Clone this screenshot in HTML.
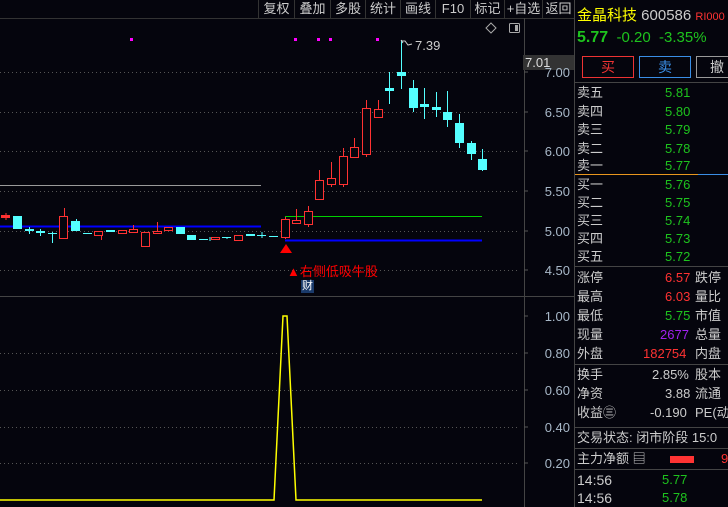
<!DOCTYPE html><html><head><meta charset="utf-8"><style>
body{margin:0;width:728px;height:507px;background:#05050d;overflow:hidden;position:relative;font-family:"Liberation Sans","Noto Sans CJK SC",sans-serif;}
.a{position:absolute;white-space:nowrap}
.tb{position:absolute;top:0;height:18px;font-size:13px;color:#ccc;line-height:17px;text-align:center;border-right:1px solid #333}
.r{position:absolute;left:577px;font-size:13px;color:#ccc;white-space:nowrap;line-height:18px}
.g{color:#1ec31e}.rd{color:#ff3232}
.hl{position:absolute;left:574px;width:154px;height:1px;background:#444}
</style></head><body>
<svg width="728" height="507" style="position:absolute;left:0;top:0">
<line x1="0" y1="18.5" x2="574" y2="18.5" stroke="#333"/>
<line x1="258.5" y1="0" x2="258.5" y2="18" stroke="#333"/>
<line x1="524.5" y1="18" x2="524.5" y2="507" stroke="#444"/>
<line x1="574.5" y1="0" x2="574.5" y2="507" stroke="#444"/>
<line x1="0" y1="296.5" x2="574" y2="296.5" stroke="#444"/>
<g stroke="#555" stroke-dasharray="1,3">
<line x1="0" y1="72.5" x2="520" y2="72.5"/><line x1="0" y1="112.5" x2="520" y2="112.5"/><line x1="0" y1="151.5" x2="520" y2="151.5"/><line x1="0" y1="191.5" x2="520" y2="191.5"/><line x1="0" y1="231.5" x2="520" y2="231.5"/><line x1="0" y1="270.5" x2="520" y2="270.5"/>
<line x1="0" y1="353.5" x2="520" y2="353.5"/><line x1="0" y1="390.5" x2="520" y2="390.5"/><line x1="0" y1="427.5" x2="520" y2="427.5"/><line x1="0" y1="463.5" x2="520" y2="463.5"/>
</g>
<line x1="0" y1="185.5" x2="261" y2="185.5" stroke="#9a9a9a"/>
<line x1="0" y1="226.5" x2="261" y2="226.5" stroke="#0000ff" stroke-width="2"/>
<line x1="285" y1="216.5" x2="482" y2="216.5" stroke="#00d000"/>
<line x1="285" y1="240.5" x2="482" y2="240.5" stroke="#0000ff" stroke-width="2"/>
<g fill="#ff00ff"><rect x="130" y="38" width="3" height="3"/><rect x="294" y="38" width="3" height="3"/><rect x="317" y="38" width="3" height="3"/><rect x="329" y="38" width="3" height="3"/><rect x="376" y="38" width="3" height="3"/></g>
<g stroke="#ff3232" fill="none">
<path d="M285.5 217V239M319.5 170V199M331.5 162V187M343.5 148V187M354.5 138V157M366.5 100V157M378.5 100V109M296.5 209V223M308.5 206V227M64.5 208V238M101.5 231V240M133.5 225V232M157.5 222V233M6 213V220"/>
<rect x="281.5" y="219.5" width="8" height="18" fill="#05050d"/>
<rect x="292.5" y="220.5" width="8" height="3" fill="#05050d"/>
<rect x="304.5" y="211.5" width="8" height="13" fill="#05050d"/>
<rect x="315.5" y="180.5" width="8" height="19" fill="#05050d"/>
<rect x="327.5" y="178.5" width="8" height="6" fill="#05050d"/>
<rect x="339.5" y="156.5" width="8" height="28" fill="#05050d"/>
<rect x="350.5" y="147.5" width="8" height="10" fill="#05050d"/>
<rect x="362.5" y="108.5" width="8" height="46" fill="#05050d"/>
<rect x="374.5" y="109.5" width="8" height="8" fill="#05050d"/>
<rect x="59.5" y="216.5" width="8" height="22" fill="#05050d"/>
<rect x="94.5" y="231.5" width="8" height="4" fill="#05050d"/>
<rect x="118.5" y="230.5" width="8" height="3" fill="#05050d"/>
<rect x="129.5" y="229.5" width="8" height="3" fill="#05050d"/>
<rect x="141.5" y="232.5" width="8" height="14" fill="#05050d"/>
<rect x="153.5" y="231.5" width="8" height="2" fill="#05050d"/>
<rect x="164.5" y="227.5" width="8" height="3" fill="#05050d"/>
<rect x="211.5" y="237.5" width="8" height="2" fill="#05050d"/>
<rect x="234.5" y="235.5" width="8" height="5" fill="#05050d"/>
</g>
<rect x="1" y="215" width="9" height="3" fill="#ff3232"/>
<g stroke="#54ffff">
<path d="M389.5 72V104M401.5 40V89M413.5 80V112M424.5 88V119M436.5 92V117M447.5 91V127M459.5 114V148M471.5 141V160M482.5 149V171M29.5 227V234M40.5 229V236M52.5 232V243M76.5 219V231M210 237V241M262 232V238M227 237V239"/>
</g>
<g fill="#54ffff">
<rect x="385" y="88" width="9" height="3"/><rect x="397" y="72" width="9" height="4"/><rect x="409" y="88" width="9" height="20"/><rect x="420" y="104" width="9" height="3"/><rect x="432" y="107" width="9" height="3"/><rect x="443" y="112" width="9" height="8"/><rect x="455" y="123" width="9" height="20"/><rect x="467" y="143" width="9" height="11"/><rect x="478" y="159" width="9" height="11"/>
<rect x="13" y="216" width="9" height="13"/><rect x="25" y="229" width="9" height="2"/><rect x="36" y="231" width="9" height="2"/><rect x="48" y="233" width="9" height="1"/><rect x="71" y="221" width="9" height="10"/><rect x="83" y="233" width="9" height="1"/><rect x="106" y="230" width="9" height="2"/><rect x="176" y="227" width="9" height="7"/><rect x="187" y="235" width="9" height="5"/><rect x="199" y="239" width="9" height="1"/><rect x="222" y="237" width="9" height="1"/><rect x="246" y="234" width="9" height="2"/><rect x="257" y="235" width="9" height="1"/><rect x="269" y="236" width="9" height="1"/>
</g>
<path d="M401 40 L403 43 M402 41 H405 L408 45 L412 44" stroke="#ccc" fill="none"/>
<polygon points="286,244 292,253 280,253" fill="#ff0000"/>
<path d="M491 23 L496 28 L491 33 L486 28Z" stroke="#aaa" fill="none"/>
<rect x="509.5" y="23.5" width="10" height="9" stroke="#aaa" fill="none" rx="1"/><rect x="515" y="25" width="3" height="6" fill="#aaa"/>
<polyline points="0,500 274,500 283,316 287,316 296,500 482,500" stroke="#ffff00" fill="none" stroke-width="1.5"/>
<rect x="523" y="55" width="51" height="15" fill="#333"/>
<g stroke="#555"><path d="M524 72h4M524 112h4M524 151h4M524 191h4M524 231h4M524 270h4M524 316h4M524 353h4M524 390h4M524 427h4M524 463h4"/></g>
<g fill="#a8b8c8" font-size="13" text-anchor="end" font-family="Liberation Sans">
<text x="570" y="77">7.00</text><text x="570" y="117">6.50</text><text x="570" y="156">6.00</text><text x="570" y="196">5.50</text><text x="570" y="236">5.00</text><text x="570" y="275">4.50</text>
<text x="570" y="321">1.00</text><text x="570" y="358">0.80</text><text x="570" y="395">0.60</text><text x="570" y="432">0.40</text><text x="570" y="468">0.20</text>
</g>
<text x="525" y="67" fill="#ddd" font-size="13" font-family="Liberation Sans">7.01</text>
<text x="415" y="50" fill="#ccc" font-size="13" font-family="Liberation Sans">7.39</text>
</svg>
<div class="tb" style="left:259px;width:35px">复权</div>
<div class="tb" style="left:295px;width:35px">叠加</div>
<div class="tb" style="left:331px;width:34px">多股</div>
<div class="tb" style="left:366px;width:34px">统计</div>
<div class="tb" style="left:401px;width:34px">画线</div>
<div class="tb" style="left:436px;width:34px">F10</div>
<div class="tb" style="left:471px;width:33px">标记</div>
<div class="tb" style="left:505px;width:37px">+自选</div>
<div class="tb" style="left:543px;width:31px;border:none">返回</div>
<div class="a" style="left:287px;top:261px;font-size:13px;color:#f00">▲右侧低吸牛股</div>
<div class="a" style="left:301px;top:280px;width:13px;height:13px;background:#1a3a6a;color:#fff;font-size:11px;line-height:13px;text-align:center">财</div>
<div class="a" style="left:577px;top:4px;font-size:15px;color:#ff0">金晶科技 <span style="color:#ccc">600586</span> <span style="color:#f33;font-size:11px">RI000</span></div>
<div class="a" style="left:577px;top:29px;font-size:15px;color:#1ec31e"><b style="font-size:16px">5.77</b>&nbsp; -0.20 &nbsp;-3.35%</div>
<div class="a" style="left:582px;top:56px;width:50px;height:20px;border:1px solid #e33;color:#e33;text-align:center;line-height:20px;font-size:14px">买</div>
<div class="a" style="left:639px;top:56px;width:50px;height:20px;border:1px solid #3a8ee6;color:#3a8ee6;text-align:center;line-height:20px;font-size:14px">卖</div>
<div class="a" style="left:696px;top:56px;width:40px;height:20px;border:1px solid #999;color:#ccc;text-align:center;line-height:20px;font-size:14px">撤</div>
<div class="hl" style="top:82px"></div>
<div class="r" style="top:84px">卖五</div><div class="r g" style="left:665px;top:84px">5.81</div>
<div class="r" style="top:103px">卖四</div><div class="r g" style="left:665px;top:103px">5.80</div>
<div class="r" style="top:121px">卖三</div><div class="r g" style="left:665px;top:121px">5.79</div>
<div class="r" style="top:140px">卖二</div><div class="r g" style="left:665px;top:140px">5.78</div>
<div class="r" style="top:157px">卖一</div><div class="r g" style="left:665px;top:157px">5.77</div>
<div class="a" style="left:575px;top:174px;width:123px;height:1px;background:#e8961e"></div><div class="a" style="left:698px;top:174px;width:30px;height:1px;background:#3a8ee6"></div>
<div class="r" style="top:176px">买一</div><div class="r g" style="left:665px;top:176px">5.76</div>
<div class="r" style="top:194px">买二</div><div class="r g" style="left:665px;top:194px">5.75</div>
<div class="r" style="top:212px">买三</div><div class="r g" style="left:665px;top:212px">5.74</div>
<div class="r" style="top:230px">买四</div><div class="r g" style="left:665px;top:230px">5.73</div>
<div class="r" style="top:248px">买五</div><div class="r g" style="left:665px;top:248px">5.72</div>
<div class="hl" style="top:266px"></div>
<div class="r" style="top:269px">涨停</div><div class="r rd" style="left:665px;top:269px">6.57</div><div class="r" style="left:695px;top:269px">跌停</div>
<div class="r" style="top:288px">最高</div><div class="r rd" style="left:665px;top:288px">6.03</div><div class="r" style="left:695px;top:288px">量比</div>
<div class="r" style="top:307px">最低</div><div class="r g" style="left:665px;top:307px">5.75</div><div class="r" style="left:695px;top:307px">市值</div>
<div class="r" style="top:326px">现量</div><div class="r" style="left:660px;top:326px;color:#a020f0">2677</div><div class="r" style="left:695px;top:326px">总量</div>
<div class="r" style="top:345px">外盘</div><div class="r rd" style="left:643px;top:345px">182754</div><div class="r" style="left:695px;top:345px">内盘</div>
<div class="hl" style="top:364px"></div>
<div class="r" style="top:366px">换手</div><div class="r" style="left:652px;top:366px">2.85%</div><div class="r" style="left:695px;top:366px">股本</div>
<div class="r" style="top:385px">净资</div><div class="r" style="left:665px;top:385px">3.88</div><div class="r" style="left:695px;top:385px">流通</div>
<div class="r" style="top:404px">收益㊂</div><div class="r" style="left:650px;top:404px">-0.190</div><div class="r" style="left:695px;top:404px">PE(动</div>
<div class="hl" style="top:427px"></div>
<div class="r" style="top:429px">交易状态: 闭市阶段 15:0</div>
<div class="hl" style="top:448px"></div>
<div class="r" style="top:450px">主力净额 ▤</div><div class="a" style="left:670px;top:456px;width:24px;height:7px;background:#f33"></div><div class="r rd" style="left:721px;top:450px">9</div>
<div class="hl" style="top:469px"></div>
<div class="r" style="top:471px;font-size:14px">14:56</div><div class="r g" style="left:662px;top:471px">5.77</div>
<div class="r" style="top:489px;font-size:14px">14:56</div><div class="r g" style="left:662px;top:489px">5.78</div>
</body></html>
